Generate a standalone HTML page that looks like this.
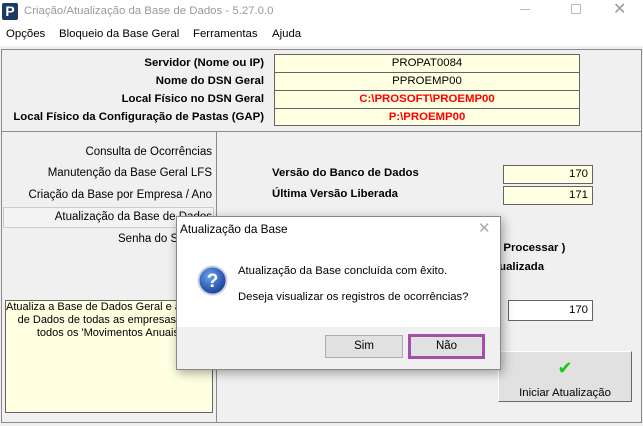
<!DOCTYPE html>
<html><head><meta charset="utf-8"><style>
*{margin:0;padding:0;box-sizing:border-box}
body{width:643px;height:426px;overflow:hidden;background:#f0f0f0;font-family:"Liberation Sans","DejaVu Sans",sans-serif;font-size:11.5px;color:#000;position:relative}
.a{position:absolute;white-space:nowrap}
.b{font-weight:bold;font-size:11.4px}
.fld{position:absolute;background:#ffffe1;border:1px solid #646464;text-align:center;font-size:11.4px;line-height:17px}
.r{text-align:right;padding-right:4px}
</style></head><body>
<div class="a" style="left:0;top:0;width:643px;height:46px;background:#fff"></div>
<div class="a" style="left:2px;top:3px;width:16px;height:17px;background:#1b3a66;border-radius:2px;color:#fff;font-weight:bold;font-size:14px;line-height:17px;text-align:center">P</div>
<div class="a" style="left:24px;top:5px;color:#999;font-size:11.4px">Criação/Atualização da Base de Dados - 5.27.0.0</div>
<div class="a" style="left:520px;top:9px;width:10px;height:1px;background:#bbb"></div>
<div class="a" style="left:571px;top:4px;width:10px;height:10px;border:1px solid #bbb"></div>
<div class="a" style="left:613px;top:-1px;color:#999;font-size:16px">✕</div>
<div class="a" style="left:6px;top:28px;font-size:11.4px">Opções</div>
<div class="a" style="left:59px;top:28px;font-size:11.4px">Bloqueio da Base Geral</div>
<div class="a" style="left:193px;top:28px;font-size:11.4px">Ferramentas</div>
<div class="a" style="left:272px;top:28px;font-size:11.4px">Ajuda</div>
<div class="a" style="left:1px;top:49px;width:641px;height:83px;border:1px solid #8a8a8a;border-bottom:none"></div>
<div class="a b" style="right:379px;top:57px">Servidor (Nome ou IP)</div>
<div class="a b" style="right:379px;top:75px">Nome do DSN Geral</div>
<div class="a b" style="right:379px;top:93px">Local Físico no DSN Geral</div>
<div class="a b" style="right:379px;top:111px">Local Físico da Configuração de Pastas (GAP)</div>
<div class="fld" style="left:274px;top:54px;width:306px;height:19px">PROPAT0084</div>
<div class="fld" style="left:274px;top:72px;width:306px;height:19px">PPROEMP00</div>
<div class="fld b" style="left:274px;top:90px;width:306px;height:19px;color:#f00">C:\PROSOFT\PROEMP00</div>
<div class="fld b" style="left:274px;top:108px;width:306px;height:18px;color:#f00">P:\PROEMP00</div>
<div class="a" style="left:1px;top:131px;width:216px;height:292px;border:1px solid #8a8a8a"></div>
<div class="a" style="left:216px;top:131px;width:426px;height:292px;border:1px solid #8a8a8a"></div>
<div class="a" style="right:431px;top:146px">Consulta de Ocorrências</div>
<div class="a" style="right:431px;top:167px">Manutenção da Base Geral LFS</div>
<div class="a" style="right:431px;top:189px">Criação da Base por Empresa / Ano</div>
<div class="a" style="left:3px;top:207px;width:211px;height:21px;border:1px solid #ccc;background:#f3f3f3"></div>
<div class="a" style="right:431px;top:211px">Atualização da Base de Dados</div>
<div class="a" style="right:431px;top:233px">Senha do Sistema</div>
<div class="a" style="left:5px;top:300px;width:208px;height:113px;background:#ffffe1;border:1px solid #646464;text-align:center;font-size:11px;line-height:13px">Atualiza a Base de Dados Geral e as Bases<br>de Dados de todas as empresas e de<br>todos os 'Movimentos Anuais'</div>
<div class="a b" style="left:272px;top:167px">Versão do Banco de Dados</div>
<div class="a b" style="left:272px;top:188px">Última Versão Liberada</div>
<div class="fld r" style="left:503px;top:165px;width:90px;height:19px;text-align:right">170</div>
<div class="fld r" style="left:503px;top:186px;width:90px;height:19px;text-align:right">171</div>
<div class="a b" style="left:447px;top:242px">Versões a Processar )</div>
<div class="a b" style="left:447px;top:261px">Versão Atualizada</div>
<div class="fld r" style="left:508px;top:300px;width:85px;height:21px;background:#fff;line-height:19px;text-align:right">170</div>
<div class="a" style="left:498px;top:351px;width:134px;height:51px;background:#e1e1e1;border:1px solid;border-color:#fff #696969 #696969 #fff;text-align:center">
<div style="color:#1c1;font-size:18px;font-weight:bold;margin-top:6px;height:22px">✔</div>
<div style="margin-top:7px;font-size:11.4px">Iniciar Atualização</div></div>
<div class="a" style="left:176px;top:216px;width:325px;height:154px;background:#fff;border:1px solid #888;box-shadow:2px 3px 10px rgba(0,0,0,.35)"></div>
<div class="a" style="left:180px;top:222px;font-size:11.8px">Atualização da Base</div>
<div class="a" style="left:478px;top:219px;color:#aaa;font-size:15px">✕</div>
<svg class="a" style="left:197px;top:265px" width="31" height="31"><defs><radialGradient id="g" cx="40%" cy="35%" r="65%"><stop offset="0" stop-color="#6aa4ef"/><stop offset="1" stop-color="#1a3e9a"/></radialGradient></defs><circle cx="15.5" cy="15.5" r="14" fill="url(#g)" stroke="#c8d0e0" stroke-width="2"/><text x="15.5" y="22" fill="#fff" font-size="19" font-weight="bold" text-anchor="middle" font-family="Liberation Sans">?</text></svg>
<div class="a" style="left:238px;top:265px;font-size:11.3px">Atualização da Base concluída com êxito.</div>
<div class="a" style="left:238px;top:291px;font-size:11.3px">Deseja visualizar os registros de ocorrências?</div>
<div class="a" style="left:177px;top:327px;width:323px;height:42px;background:#f0f0f0"></div>
<div class="a" style="left:325px;top:335px;width:78px;height:23px;background:#e1e1e1;border:1px solid #adadad;text-align:center;line-height:21px;font-size:11.5px">Sim</div>
<div class="a" style="left:408px;top:334px;width:77px;height:25px;background:#e1e1e1;border:3px solid #a050a8;text-align:center;line-height:19px;font-size:11.5px">Não</div>
</body></html>
